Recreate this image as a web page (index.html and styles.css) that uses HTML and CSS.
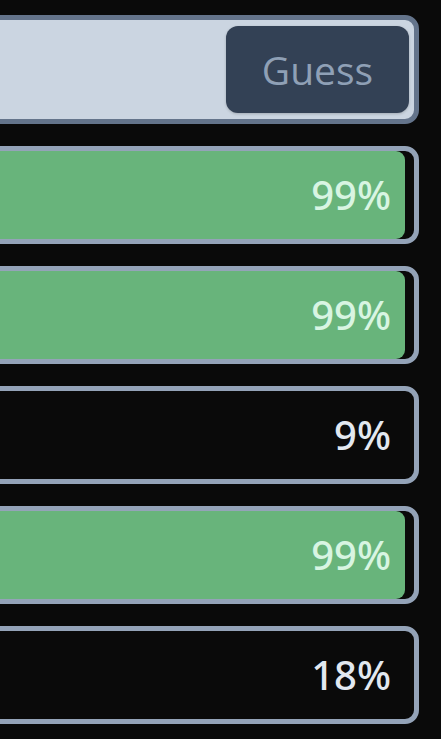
FILE: index.html
```html
<!DOCTYPE html>
<html lang="en">
<head>
    <meta charset="UTF-8">
    <meta name="viewport" content="width=device-width, initial-scale=1.0">
    <title>Guess</title>
    <link rel="stylesheet" href="styles.css">
</head>
<body>
    <div class="container">
        <form class="guess-form">
            <input type="text" class="guess-input" aria-label="Guess">
            <button type="button" class="guess-button">Guess</button>
        </form>

        <div class="result">
            <div class="result-bar" style="width: 99%"></div>
            <span class="result-label hit">99%</span>
        </div>
        <div class="result">
            <div class="result-bar" style="width: 99%"></div>
            <span class="result-label hit">99%</span>
        </div>
        <div class="result">
            <span class="result-label">9%</span>
        </div>
        <div class="result">
            <div class="result-bar" style="width: 99%"></div>
            <span class="result-label hit">99%</span>
        </div>
        <div class="result">
            <span class="result-label">18%</span>
        </div>
    </div>
</body>
</html>
```

FILE: styles.css
```css
* {
    box-sizing: border-box;
}
body {
    margin: 0;
    background-color: #0a0a0a;
    font-family: "Noto Sans", "Open Sans", sans-serif;
    overflow: hidden;
    height: 100vh;
}
.container {
    display: flex;
    flex-direction: column;
    align-items: flex-end;
    gap: 22px;
    padding: 15px 22px 0 0;
}

.guess-form {
    display: flex;
    width: 910px;
    height: 109px;
    padding: 6px;
    background-color: #cbd5e1;
    border: 5px solid #64748b;
    border-radius: 14px;
}
.guess-input {
    flex: 1;
    border: none;
    background: transparent;
    outline: none;
}
.guess-button {
    width: 183px;
    height: 100%;
    margin-right: -1px;
    border: none;
    border-radius: 12px;
    background-color: #334155;
    color: #8fa0b6;
    font-family: "Open Sans", sans-serif;
    font-size: 39px;
    font-weight: 500;
    box-shadow: 0 1px 3px rgba(0, 0, 0, 0.2);
}

.result {
    display: grid;
    width: 910px;
    height: 98px;
    border: 5px solid #94a3b8;
    border-radius: 14px;
    overflow: hidden;
}
.result-bar,
.result-label {
    grid-area: 1 / 1;
}
.result-bar {
    height: 100%;
    background-color: #68b47b;
    border-radius: 0 9px 9px 0;
}
.result-label {
    align-self: center;
    justify-self: end;
    padding-right: 23px;
    color: #e2e8f0;
    font-size: 40px;
    font-weight: 500;
    line-height: 1;
}
.result-label.hit {
    color: #d8f5e2;
}
```
